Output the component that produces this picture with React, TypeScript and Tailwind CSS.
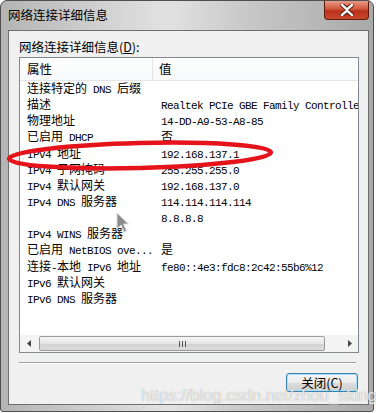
import React from 'react';

const rows: [string, string][] = [
  ['连接特定的 DNS 后缀', ''],
  ['描述', 'Realtek PCIe GBE Family Controller'],
  ['物理地址', '14-DD-A9-53-A8-85'],
  ['已启用 DHCP', '否'],
  ['IPv4 地址', '192.168.137.1'],
  ['IPv4 子网掩码', '255.255.255.0'],
  ['IPv4 默认网关', '192.168.137.0'],
  ['IPv4 DNS 服务器', '114.114.114.114'],
  ['', '8.8.8.8'],
  ['IPv4 WINS 服务器', ''],
  ['已启用 NetBIOS ove...', '是'],
  ['连接-本地 IPv6 地址', 'fe80::4e3:fdc8:2c42:55b6%12'],
  ['IPv6 默认网关', ''],
  ['IPv6 DNS 服务器', ''],
];

const cjk = /([\u2E80-\u9FFF\uFF00-\uFFEF]+)/;

// latin in the list is a narrow mono face, CJK keeps its full width
const Mixed = ({ text }: { text: string }) => (
  <>
    {text.split(cjk).map((part, i) =>
      cjk.test(part) ? (
        <span key={i} className="text-[12px] tracking-normal">
          {part}
        </span>
      ) : (
        <span key={i}>{part}</span>
      )
    )}
  </>
);

const ui = "font-['Noto_Sans_CJK_SC',sans-serif]";
const list = "font-['Liberation_Mono','Noto_Sans_CJK_SC',monospace]";

const App = () => {
  return (
    <div className="relative w-[376px] h-[413px] bg-white overflow-hidden">
      <div className="w-[374px] h-[412px] flex flex-col rounded-t-[7px] rounded-b-[3px] border border-[#4f4f4f] bg-[linear-gradient(90deg,#b4b4b4,#cfcfcf_25%,#e2e2e2_45%,#c9c9c9_65%,#a9a9a9)]">
        {/* title bar */}
        <div className="h-[29px] flex items-start shrink-0">
          <span className={`${ui} text-[12.5px] leading-[16px] text-black pl-[7px] pt-[6px]`}>
            网络连接详细信息
          </span>
          <div className="ml-auto mr-[4px] w-[45px] h-[19px] flex items-center justify-center rounded-b-[4px] border border-t-0 border-[#5e1a0e] bg-[linear-gradient(180deg,#e89a86,#d1553a_45%,#b8301a_55%,#c94a2c)]">
            <svg width="14" height="12" viewBox="0 0 14 12">
              <path
                d="M2 1 L7 5 L12 1 M2 11 L7 7 L12 11"
                stroke="#4a1408"
                strokeWidth="4.2"
                fill="none"
                strokeLinecap="square"
              />
              <path
                d="M2 1 L7 5.5 L12 1 M2 11 L7 6.5 L12 11"
                stroke="#ffffff"
                strokeWidth="2.4"
                fill="none"
                strokeLinecap="square"
              />
            </svg>
          </div>
        </div>

        {/* client area */}
        <div className="ml-[7px] mr-[4px] mb-[6px] flex-1 flex flex-col border border-[#6f6f6f] bg-[#f0f0f0] pl-[10px] pr-[9px]">
          <div className={`${ui} text-[12.5px] leading-[16px] text-black pt-[8px]`}>
            网络连接详细信息(<span className="underline">D</span>):
          </div>

          <div className="mt-[2px] h-[296px] flex flex-col border border-[#828790] bg-white overflow-hidden">
            <div className="h-[23px] shrink-0 flex border-b border-[#e5e5e5] bg-[linear-gradient(180deg,#ffffff,#f7f8fa)]">
              <div className={`${ui} w-[133px] pl-[7px] text-[12.5px] leading-[22px] border-r border-[#e3e3e3]`}>
                属性
              </div>
              <div className={`${ui} pl-[6px] text-[12.5px] leading-[22px]`}>值</div>
            </div>

            <div className={`${list} flex-1 pt-[1px] text-[11px] tracking-[-0.6px] text-black`}>
              {rows.map(([k, v], i) => (
                <div key={i} className="h-[16.15px] flex leading-[16px] whitespace-nowrap">
                  <div className="w-[134px] shrink-0 pl-[7px] overflow-hidden">
                    <Mixed text={k} />
                  </div>
                  <div className="pl-[7px]">
                    <Mixed text={v} />
                  </div>
                </div>
              ))}
            </div>

            {/* horizontal scrollbar */}
            <div className="h-[17px] shrink-0 flex items-center bg-[#f3f3f3]">
              <div className="w-[17px] h-[17px] flex items-center justify-center">
                <svg width="4" height="7" viewBox="0 0 4 7">
                  <path d="M4 0 L0 3.5 L4 7 Z" fill="#444" />
                </svg>
              </div>
              <div className="w-[286px] h-[15px] ml-[2px] flex items-center justify-center rounded-[2px] border border-[#9a9a9a] bg-[linear-gradient(180deg,#f6f6f6,#e4e4e4_50%,#d3d3d3_55%,#dcdcdc)]">
                <svg width="7" height="6" viewBox="0 0 7 6">
                  <path d="M0.5 0 V6 M3.5 0 V6 M6.5 0 V6" stroke="#555" strokeWidth="1" />
                </svg>
              </div>
              <div className="ml-auto w-[17px] h-[17px] flex items-center justify-center">
                <svg width="4" height="7" viewBox="0 0 4 7">
                  <path d="M0 0 L4 3.5 L0 7 Z" fill="#444" />
                </svg>
              </div>
            </div>
          </div>

          <div className="mt-[9px] h-[2px] border-t border-[#a0a0a0] border-b border-b-white mr-[3px]" />

          <div className="mt-[9px] flex">
            <button
              className={`${ui} ml-auto mr-[1px] w-[72px] h-[19px] rounded-[3px] border border-[#3c7fb1] shadow-[inset_0_0_0_1px_#a8e0f7] bg-[linear-gradient(180deg,#f6f6f6,#ebebeb_50%,#dddddd_51%,#cfcfcf)] text-[12.5px] leading-[17px] text-black`}
            >
              关闭(C)
            </button>
          </div>
        </div>
      </div>

      {/* red circling mark */}
      <svg className="absolute left-0 top-0 pointer-events-none" width="376" height="413">
        <ellipse
          cx="140"
          cy="155.5"
          rx="131"
          ry="12.5"
          transform="rotate(-1.4 140 155.5)"
          fill="none"
          stroke="#e5131b"
          strokeWidth="4.5"
        />
      </svg>

      {/* mouse cursor */}
      <svg className="absolute left-[116px] top-[212px]" width="14" height="22" viewBox="0 0 14 22">
        <path
          d="M1 1 L1 17 L5 13 L8 20 L10.5 19 L7.5 12 L12.5 12 Z"
          fill="#8c8c8c"
          stroke="#d8d8d8"
          strokeWidth="1"
        />
      </svg>

      {/* watermark */}
      <div className="absolute left-[141px] top-[385px] font-['Liberation_Sans',sans-serif] text-[16.5px] leading-[20px] text-white/80 [text-shadow:0_0_1px_#8a8a8a]">
        https://blog.csdn.net/zhou_sking
      </div>
    </div>
  );
};

export default App;
